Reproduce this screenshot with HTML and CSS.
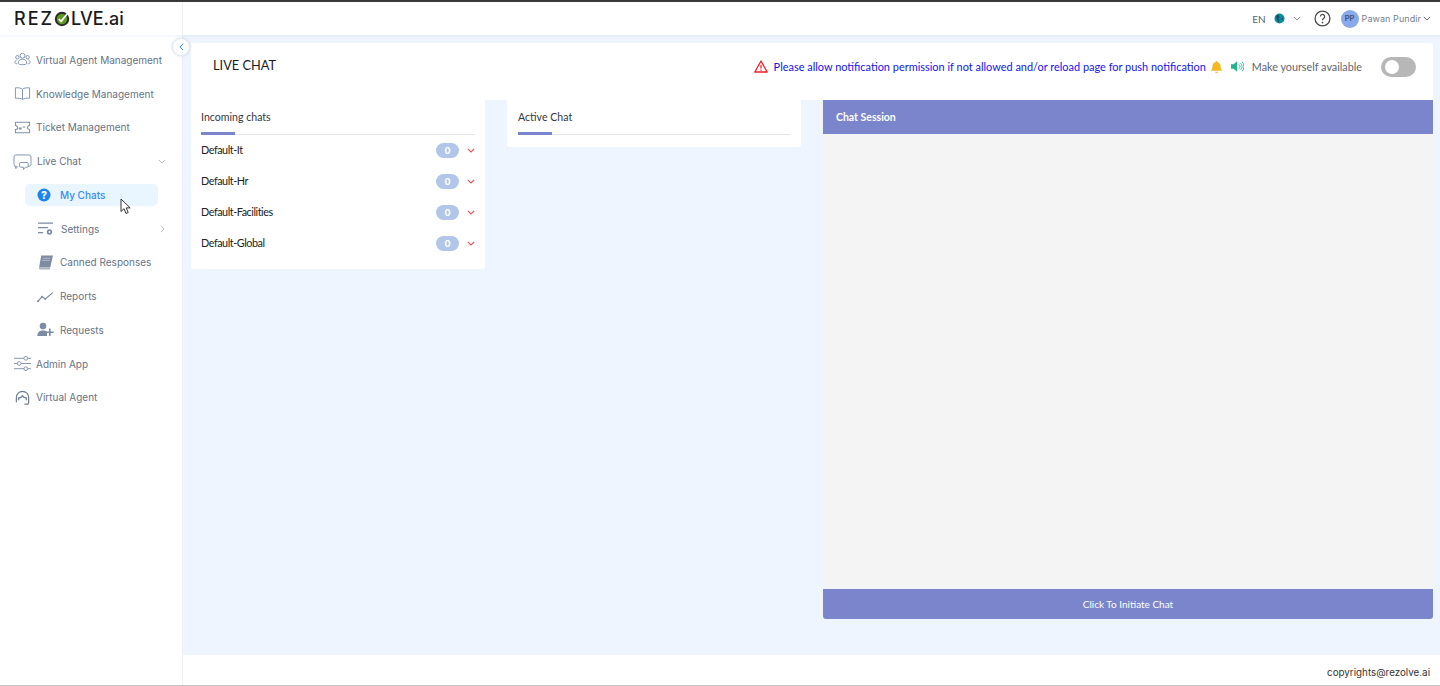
FILE: index.html
```html
<!DOCTYPE html>
<html lang="en">
<head>
<meta charset="utf-8">
<title>Live Chat</title>
<link rel="stylesheet" href="styles.css">
</head>
<body>
<div class="app">
  <header class="topbar">
    <div class="logo"><span class="logo-a">REZ</span><svg class="logo-o" viewBox="0 0 16 16"><circle cx="8" cy="8" r="6.2" fill="#5d9a1e" stroke="#2a2a2a" stroke-width="2"/><path d="M4.8 8l2.3 2.4L13.5 2.5" fill="none" stroke="#fff" stroke-width="1.8"/></svg><span class="logo-b">LVE.ai</span></div>
    <div class="topbar-right">
      <span class="lang">EN</span>
      <svg class="globe" viewBox="0 0 12 12"><circle cx="6" cy="6" r="5.5" fill="#0b8f9c"/><path d="M2 3l3-1 1 2-1 2 1 2-1 2-2-3zM8 5l2 1-1 2-1-1z" fill="#14506b"/></svg>
      <svg class="chev-s" viewBox="0 0 10 6"><path d="M1 1l4 4 4-4" fill="none" stroke="#7f8ca3" stroke-width="1.2"/></svg>
      <svg class="help" viewBox="0 0 16 16"><circle cx="8" cy="8" r="7" fill="none" stroke="#4a4a4a" stroke-width="1.2"/><path d="M6 6.2a2 2 0 1 1 3.2 1.6c-.8.6-1.2 1-1.2 1.9" fill="none" stroke="#4a4a4a" stroke-width="1.2"/><circle cx="8" cy="11.8" r=".8" fill="#4a4a4a"/></svg>
      <span class="avatar">PP</span>
      <span class="user">Pawan Pundir</span>
      <svg class="chev-u" viewBox="0 0 10 6"><path d="M1 1l4 4 4-4" fill="none" stroke="#5c6470" stroke-width="1.2"/></svg>
    </div>
  </header>

  <div class="middle">
    <nav class="sidebar">
      <a class="nav-item"><svg class="ico" viewBox="0 0 18 18"><g fill="none" stroke="#7f90ad" stroke-width="1"><circle cx="9" cy="5" r="2.6"/><circle cx="3.6" cy="6.6" r="1.8"/><circle cx="14.4" cy="6.6" r="1.8"/><path d="M4.5 13c0-3 2-4.400 4.500-4.400s4.500 1.400 4.500 4.400c0 2-9 2-9 0z"/><path d="M2.800 9.500C1.500 10 1 11 1 12.300c0 .8 1.200 1.200 2.600 1.300M15.200 9.500c1.300.5 1.800 1.500 1.800 2.800 0 .8-1.200 1.200-2.600 1.300"/></g></svg><span>Virtual Agent Management</span></a>
      <a class="nav-item"><svg class="ico" viewBox="0 0 18 18"><g fill="none" stroke="#7f90ad" stroke-width="1"><path d="M9 4.500C7.500 3 4.500 2.800 1.500 3v11c3-.2 6 0 7.500 1.300C10.500 14 13.500 13.800 16.500 14V3C13.500 2.800 10.500 3 9 4.500zM9 4.500v10.800"/></g></svg><span>Knowledge Management</span></a>
      <a class="nav-item"><svg class="ico" viewBox="0 0 18 18"><g fill="none" stroke="#7f90ad" stroke-width="1.100"><path d="M1.500 3.500h15v3.300a2 2 0 0 0 0 4.400v3.300h-15v-3.300a2 2 0 0 0 0-4.400z"/></g><path d="M5 9h3v2H5zM9 8h3v1H9z" fill="#7f90ad"/></svg><span>Ticket Management</span></a>
      <a class="nav-item"><svg class="ico ico-chat" viewBox="0 0 20 18"><g fill="none" stroke="#7f90ad" stroke-width="1"><path d="M3 1h14a2 2 0 0 1 2 2v8a2 2 0 0 1-2 2h-1M4 13H3a2 2 0 0 1-2-2V3a2 2 0 0 1 2-2"/><path d="M8 9h7a1 1 0 0 1 1 1v3a1 1 0 0 1-1 1h-2l-2 2.500V14H8a1 1 0 0 1-1-1v-3a1 1 0 0 1 1-1zM2 13l1 2.500L5 13"/></g></svg><span class="grow">Live Chat</span><svg class="nav-chev" viewBox="0 0 10 6"><path d="M1 1l4 4 4-4" fill="none" stroke="#a7b0bf" stroke-width="1.100"/></svg></a>

      <a class="nav-item sub active"><span class="pill"><svg class="sub-ico q" viewBox="0 0 14 14"><circle cx="7" cy="7" r="6.500" fill="#1a85f2"/><text x="7" y="10.600" class="q-mark">?</text></svg><span>My Chats</span></span></a>
      <a class="nav-item sub"><svg class="sub-ico wide" viewBox="0 0 17 14"><g fill="#7d8ba3"><path d="M1 1h15v1.200H1zM1 5.500h10v1.200H1zM1 10.500h5v1.200H1z"/><circle cx="12.500" cy="10.500" r="2.700"/></g><circle cx="12.500" cy="10.500" r="1" fill="#fff"/></svg><span class="grow settings">Settings</span><svg class="nav-chev-r" viewBox="0 0 6 10"><path d="M1 1l4 4-4 4" fill="none" stroke="#a7b0bf" stroke-width="1.100"/></svg></a>
      <a class="nav-item sub"><svg class="sub-ico wide" viewBox="0 0 16 14"><path d="M4 .5h11l-2.500 11H2z" fill="#7d8ba3"/><path d="M2 11.500h10.500l-.4 2H2.500a1.200 1.200 0 0 1-.5-2z" fill="#aab4c4"/><path d="M5.500 3h7M5 5h7" stroke="#c5ccd8" stroke-width=".7"/></svg><span>Canned Responses</span></a>
      <a class="nav-item sub"><svg class="sub-ico wide" viewBox="0 0 16 14"><path d="M.8 11.500l4-4.500 3 2.300 7-6" fill="none" stroke="#7d8ba3" stroke-width="1.100"/><circle cx=".9" cy="11.500" r=".9" fill="#7d8ba3"/><circle cx="4.800" cy="7" r=".8" fill="#7d8ba3"/><circle cx="7.800" cy="9.300" r=".8" fill="#7d8ba3"/></svg><span>Reports</span></a>
      <a class="nav-item sub"><svg class="sub-ico wide" viewBox="0 0 17 14"><g fill="#7d8ba3"><circle cx="6" cy="3.600" r="3.300"/><path d="M.3 13.500c0-4 2.500-5.500 5.700-5.500 1.600 0 3 .4 4 1.300v4.200z"/><path d="M12 6h1.600v3H16.600v1.600H13.600v3H12v-3H9V9h3z"/></g></svg><span>Requests</span></a>

      <a class="nav-item"><svg class="ico" viewBox="0 0 18 18"><g fill="none" stroke="#7f90ad" stroke-width="1"><path d="M0 3.500h10.500M14.500 3.500H18M0 9h3.500M7.500 9H18M0 14.500h10.500M14.500 14.500H18"/><circle cx="12.500" cy="3.500" r="2"/><circle cx="5.500" cy="9" r="2"/><circle cx="12.500" cy="14.500" r="2"/></g></svg><span>Admin App</span></a>
      <a class="nav-item"><svg class="ico" viewBox="0 0 18 18"><g fill="none" stroke="#6f7f99" stroke-width="1.300"><path d="M2.500 14v-5a6.500 6.500 0 0 1 13 0v5.500a1.500 1.500 0 0 1-1.500 1.500h-3"/><path d="M5 12V9.500c1.800 0 3.200-.7 4-2.200.8 1.500 2.200 2.200 4 2.200V12"/></g></svg><span>Virtual Agent</span></a>
    </nav>

    <button class="collapse" type="button" aria-label="Collapse"><svg viewBox="0 0 6 10"><path d="M5 1L1 5l4 4" fill="none" stroke="#1a85f2" stroke-width="1.200"/></svg></button>
    <svg class="cursor" viewBox="0 0 11 17"><path d="M1 1v12.500l3-2.800 2 4.800 2.200-1-2-4.600h4z" fill="#fff" stroke="#333" stroke-width="1"/></svg>

    <div class="page">
      <main class="content">
        <section class="title-bar">
          <h1>LIVE CHAT</h1>
          <div class="notice">
            <svg class="warn" viewBox="0 0 14 13"><path d="M7 1L.8 12h12.400z" fill="none" stroke="#ef1c25" stroke-width="1.300" stroke-linejoin="round"/><path d="M7 4.800v3.700M7 9.500v1.200" stroke="#ef1c25" stroke-width="1.200"/></svg>
            <span class="notice-text">Please allow notification permission if not allowed and/or reload page for push notification</span>
            <svg class="bell" viewBox="0 0 14 15"><path d="M7 1a1 1 0 0 1 1 1v.500c2.300.5 3.500 2.200 3.500 4.500 0 2.500.8 3.500 1.500 4.500H1c.7-1 1.500-2 1.500-4.500 0-2.300 1.200-4 3.500-4.500V2a1 1 0 0 1 1-1z" fill="#f4b824"/><path d="M5.500 12.500h3a1.500 1.500 0 0 1-3 0z" fill="#f4b824"/></svg>
            <svg class="speaker" viewBox="0 0 15 13"><path d="M0 4h3l4-3.500v12L3 9H0z" fill="#23b58f"/><path d="M9 4a3 3 0 0 1 0 5M11 2.500a6 6 0 0 1 0 8M12.800 1a8 8 0 0 1 0 11" fill="none" stroke="#23b58f" stroke-width="1"/></svg>
            <span class="avail">Make yourself available</span>
            <span class="toggle"><span class="knob"></span></span>
          </div>
        </section>

        <section class="columns">
          <div class="card incoming">
            <div class="tab-head">Incoming chats</div>
            <ul class="queues">
              <li><span class="q-name">Default-It</span><span class="count">0</span><svg class="red-chev" viewBox="0 0 8 5"><path d="M.8.800L4 4 7.200.800" fill="none" stroke="#ef4b55" stroke-width="1.100"/></svg></li>
              <li><span class="q-name">Default-Hr</span><span class="count">0</span><svg class="red-chev" viewBox="0 0 8 5"><path d="M.8.800L4 4 7.200.800" fill="none" stroke="#ef4b55" stroke-width="1.100"/></svg></li>
              <li><span class="q-name">Default-Facilities</span><span class="count">0</span><svg class="red-chev" viewBox="0 0 8 5"><path d="M.8.800L4 4 7.200.800" fill="none" stroke="#ef4b55" stroke-width="1.100"/></svg></li>
              <li><span class="q-name">Default-Global</span><span class="count">0</span><svg class="red-chev" viewBox="0 0 8 5"><path d="M.8.800L4 4 7.200.800" fill="none" stroke="#ef4b55" stroke-width="1.100"/></svg></li>
            </ul>
          </div>
          <div class="card active-chat">
            <div class="tab-head">Active Chat</div>
          </div>
          <div class="session">
            <div class="session-head">Chat Session</div>
            <div class="session-body"></div>
            <div class="session-foot">Click To Initiate Chat</div>
          </div>
        </section>
      </main>
      <footer class="footer">copyrights@rezolve.ai</footer>
    </div>
  </div>
</div>
</body>
</html>
```
FILE: styles.css
```css
* { box-sizing: border-box; }
html, body { margin: 0; padding: 0; height: 100%; overflow: hidden; }
body { font-family: "Inter", sans-serif; background: #fff; color: #222; }

.app { height: 686px; display: flex; flex-direction: column; border-top: 2px solid #3a3a3a; border-bottom: 1px solid #c4c4c4; }

.topbar { height: 33px; flex: none; display: flex; align-items: center; justify-content: space-between; background: #fff; box-shadow: 0 1px 3px rgba(90,130,200,.1); position: relative; z-index: 2; }
.logo { width: 183px; height: 100%; padding-left: 14px; display: flex; align-items: center; border-right: 1px solid #eceff3; font-family: "Inter", sans-serif; font-size: 18px; font-weight: 500; color: #1b1b1b; }
.logo-a { letter-spacing: 2px; }
.logo-b { letter-spacing: 0; }
.logo-o { width: 16px; height: 16px; margin-right: 1px; }
.topbar-right { display: flex; align-items: center; padding-right: 9px; }
.lang { font-family: "Lato", sans-serif; font-size: 10px; color: #5b6470; margin-right: 8px; }
.globe { width: 11px; height: 11px; margin-right: 8px; }
.chev-s { width: 8px; height: 5px; margin-right: 13px; }
.help { width: 17px; height: 17px; margin-right: 10px; }
.avatar { width: 18px; height: 18px; border-radius: 50%; background: #8aa9ea; color: #37517e; font-size: 7.500px; font-weight: 600; display: flex; align-items: center; justify-content: center; margin-right: 3px; }
.user { font-size: 9px; letter-spacing: .07px; color: #78808c; margin-right: 2px; }
.chev-u { width: 8px; height: 5px; }

.middle { flex: 1; min-height: 0; display: flex; position: relative; }

.sidebar { width: 183px; flex: none; padding-top: 8px; background: #fff; border-right: 1px solid #eceff3; }
.nav-item { height: 33.750px; display: flex; align-items: center; padding: 0 16px 0 14px; font-size: 10px; font-weight: 400; color: #677386; white-space: nowrap; }
.ico { width: 17px; height: 17px; margin-right: 5px; flex: none; }
.ico-chat { width: 19px; margin-left: -1px; margin-right: 5px; margin-top: 3px; }
.grow { flex: 1; }
.settings { margin-left: 1px; }
.nav-chev { width: 8px; height: 5px; }
.nav-chev-r { width: 5px; height: 8px; margin-right: 1px; }
.sub { padding-left: 37px; }
.sub-ico.wide { width: 17px; height: 15px; margin-right: 6px; flex: none; }
.active { padding-left: 25px; padding-right: 24px; }
.pill { width: 134px; height: 22px; background: #e9f5ff; border-radius: 5px; display: flex; align-items: center; padding-left: 12px; color: #3a8bf0; font-weight: 500; }
.sub-ico.q { width: 14px; height: 14px; margin-right: 9px; flex: none; }
.q-mark { font-family: "Inter", sans-serif; font-size: 10.500px; font-weight: 800; fill: #fff; text-anchor: middle; }

.collapse { position: absolute; left: 172px; top: 3px; width: 18px; height: 18px; padding: 0; border-radius: 50%; border: 1px solid #e3e8ef; background: #fff; display: flex; align-items: center; justify-content: center; z-index: 3; box-shadow: 0 0 3px rgba(90,120,170,.25); }
.collapse svg { width: 5px; height: 8px; }
.cursor { position: absolute; left: 120px; top: 163px; width: 11px; height: 17px; z-index: 3; }

.page { flex: 1; min-width: 0; display: flex; flex-direction: column; }
.content { flex: 1; min-height: 0; background: #eef5fe; padding: 8px 7px 0 7px; }
.footer { height: 30px; flex: none; background: #fff; padding: 5px 10px 0 0; display: flex; align-items: center; justify-content: flex-end; font-size: 9.800px; color: #333; }

.title-bar { height: 57px; margin-left: 1px; background: #fff; display: flex; justify-content: space-between; padding: 0 17px 0 22px; font-family: "Lato", sans-serif; }
h1 { margin: 14px 0 0; font-size: 12.800px; font-weight: 400; color: #1c1c1c; line-height: 17px; }
.notice { display: flex; align-items: center; height: 47px; }
.warn { width: 14px; height: 13px; margin-right: 6px; }
.notice-text { font-size: 10.950px; color: #1414ee; margin-right: 4px; }
.bell { width: 13px; height: 14px; margin-right: 8px; }
.speaker { width: 13px; height: 13px; margin-right: 8px; }
.avail { font-size: 10.800px; color: #5e6670; margin-right: 19px; }
.toggle { width: 35px; height: 20px; border-radius: 10px; background: #b7b7b7; display: block; padding: 3px 0 0 4px; }
.knob { width: 14px; height: 14px; border-radius: 50%; background: #fff; display: block; }

.columns { display: grid; grid-template-columns: 294px 294px 610px; column-gap: 22px; margin-left: 1px; align-items: start; font-family: "Lato", sans-serif; }
.card { background: #fff; padding: 0 10px; border-radius: 0 0 3px 3px; }
.incoming { height: 169px; }
.active-chat { height: 47px; padding: 0 11px; }
.tab-head { height: 35px; padding-top: 10px; font-size: 10.600px; line-height: 14px; color: #33383f; border-bottom: 1px solid #e4e6ec; position: relative; }
.tab-head::after { content: ""; position: absolute; left: 0; bottom: -1px; width: 34px; height: 3px; background: #7a85cb; }
.queues { list-style: none; margin: 0; padding: 0; }
.queues li { height: 30.900px; display: flex; align-items: center; font-size: 10.800px; letter-spacing: -.45px; color: #222; }
.q-name { flex: 1; padding-bottom: 1px; }
.count { width: 23px; height: 15px; border-radius: 8px; background: #b1c6e9; color: #fff; font-family: "Inter", sans-serif; font-size: 9px; font-weight: 700; text-align: center; line-height: 15px; margin-right: 8px; letter-spacing: 0; }
.red-chev { width: 8px; height: 5px; }

.session { height: 519px; display: flex; flex-direction: column; }
.session-head { height: 34px; flex: none; background: #7a85cb; color: #fff; font-size: 10.500px; font-weight: 700; padding: 0 13px 1px; display: flex; align-items: center; }
.session-body { flex: 1; background: #f4f4f4; }
.session-foot { height: 30px; flex: none; margin-top: 1px; background: #7a85cb; color: #fff; font-size: 10px; display: flex; align-items: center; justify-content: center; border-radius: 0 0 3px 3px; }
```
